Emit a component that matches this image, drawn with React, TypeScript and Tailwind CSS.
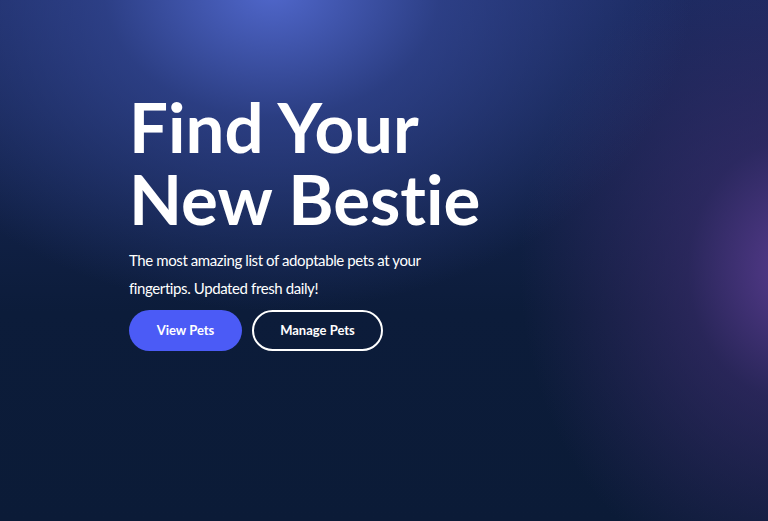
function HeroButton(props: { label: string; primary?: boolean }) {
  return (
    <button
      className={
        props.primary
          ? "h-[41px] w-[113px] rounded-full bg-[#4b5bf6] text-white text-[13px] font-bold"
          : "h-[41px] w-[131px] rounded-full border-2 border-white text-white text-[13px] font-bold"
      }
    >
      {props.label}
    </button>
  );
}

export default function App() {
  return (
    <div
      className="w-full h-[521px] overflow-hidden bg-[#0b1b37] font-['Lato',sans-serif] [font-variant-ligatures:none] bg-[radial-gradient(ellipse_420px_320px_at_272px_-10px,#5067cb_0%,rgba(52,72,150,0.7)_40%,rgba(20,35,80,0)_100%),radial-gradient(ellipse_280px_330px_at_800px_270px,#593c90_0%,rgba(60,45,110,0.6)_40%,rgba(20,30,70,0)_100%),linear-gradient(180deg,#1b2a60_0%,#0c1c3a_60%,#0b1b37_100%)]"
    >
      <div className="pl-[129px] pt-[91px] flex flex-col items-start">
        <h1 className="text-white text-[69px] leading-[72px] font-bold">
          Find Your
          <br />
          New Bestie
        </h1>
        <p className="mt-[11px] text-white text-[15px] leading-[28px] tracking-[-0.4px] max-w-[300px]">
          The most amazing list of adoptable pets at your fingertips. Updated fresh daily!
        </p>
        <div className="mt-[8px] flex gap-[10px]">
          <HeroButton label="View Pets" primary />
          <HeroButton label="Manage Pets" />
        </div>
      </div>
    </div>
  );
}
